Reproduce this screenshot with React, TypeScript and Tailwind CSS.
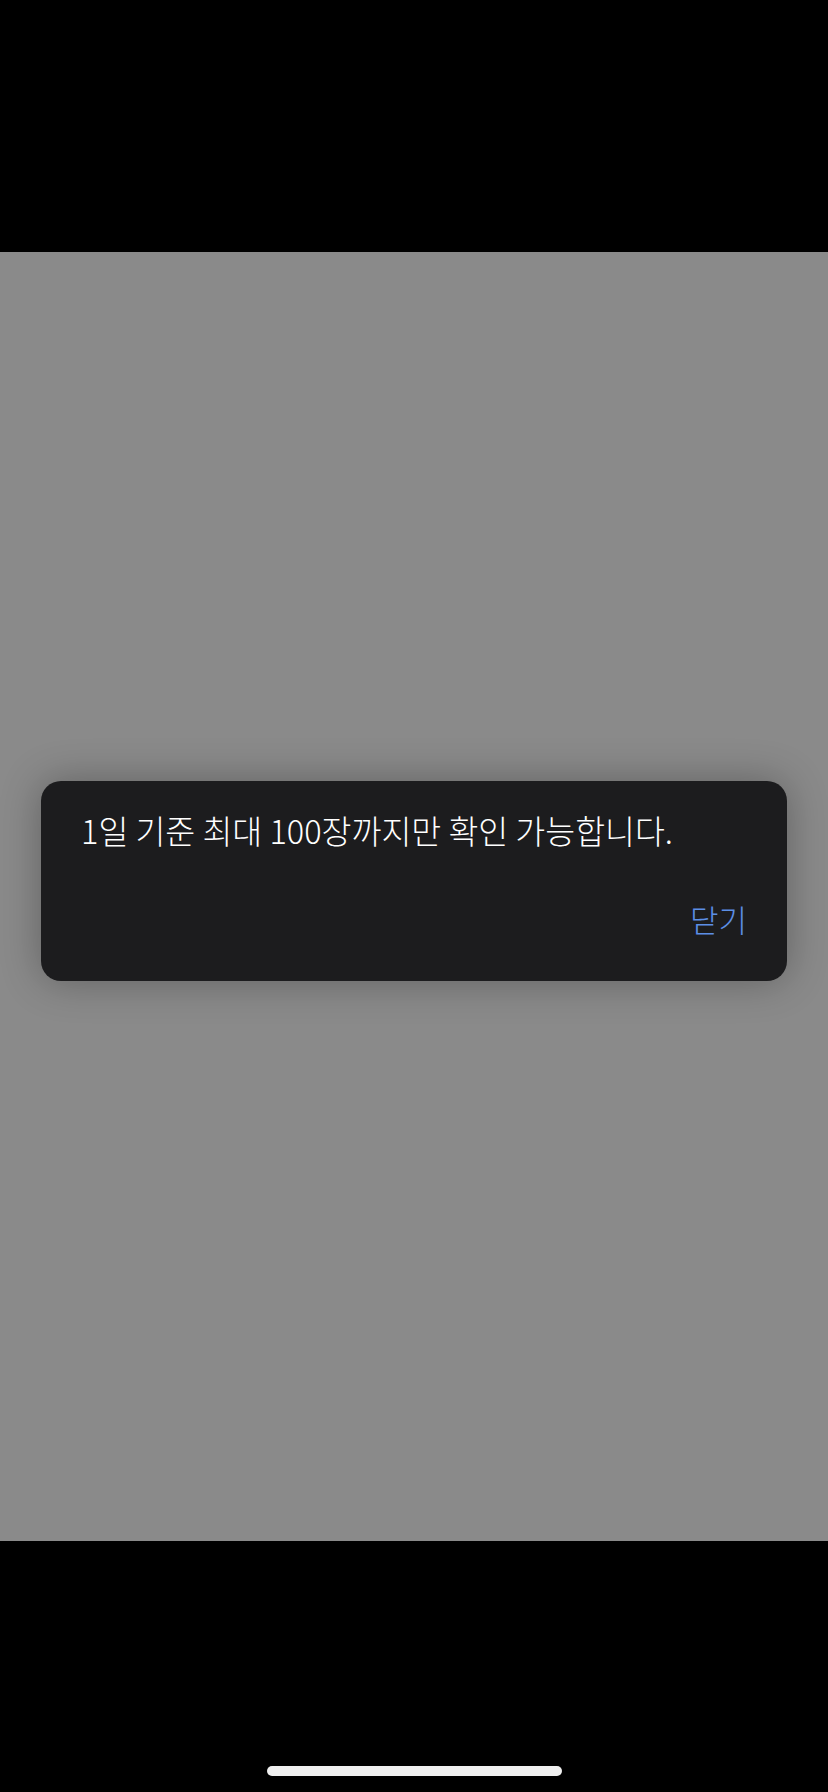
export default function App() {
  return (
    <div
      className="w-[828px] h-[1792px] flex flex-col bg-black"
      style={{ fontFamily: '"Noto Sans CJK KR", "Noto Sans", sans-serif' }}
    >
      <div className="h-[252px] bg-black shrink-0" />
      <div className="h-[1289px] bg-[#8a8a8a] shrink-0 px-[41px] pt-[529px]">
        <div className="w-[746px] h-[200px] rounded-[20px] bg-[#1c1c1e] shadow-[0_0_40px_rgba(0,0,0,0.3)] flex flex-col pl-[40px] pr-[40px] pt-[28px]">
          <p className="text-white text-[32.5px] leading-[42px] font-light whitespace-nowrap">
            1일 기준 최대 100장까지만 확인 가능합니다.
          </p>
          <div className="flex justify-end mt-[48px]">
            <span className="text-[#5c8fe6] text-[31px] leading-[40px] font-light">닫기</span>
          </div>
        </div>
      </div>
      <div className="flex-1 bg-black flex justify-center items-start pt-[225px]">
        <div className="w-[295px] h-[10px] rounded-full bg-[#efefef]" />
      </div>
    </div>
  );
}
